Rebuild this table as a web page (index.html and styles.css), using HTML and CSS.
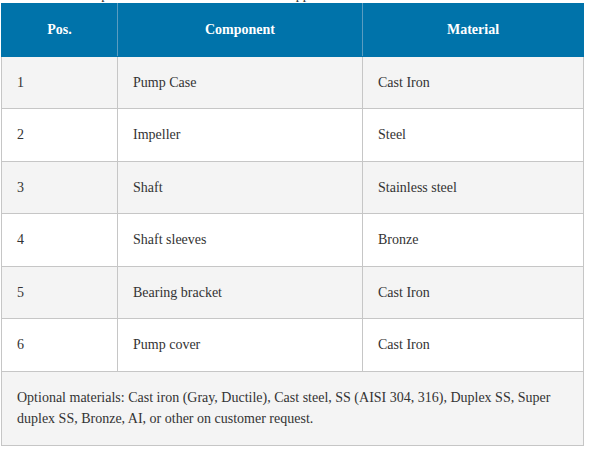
FILE: index.html
```html
<!DOCTYPE html>
<html>
<head>
<meta charset="utf-8">
<link rel="stylesheet" href="styles.css">
</head>
<body>
<p class="intro">The standard components and the materials of the supplied unit.</p>
<table class="spec">
  <colgroup>
    <col class="c1"><col class="c2"><col class="c3">
  </colgroup>
  <thead>
    <tr><th>Pos.</th><th>Component</th><th>Material</th></tr>
  </thead>
  <tbody>
    <tr><td>1</td><td>Pump Case</td><td>Cast Iron</td></tr>
    <tr><td>2</td><td>Impeller</td><td>Steel</td></tr>
    <tr><td>3</td><td>Shaft</td><td>Stainless steel</td></tr>
    <tr><td>4</td><td>Shaft sleeves</td><td>Bronze</td></tr>
    <tr><td>5</td><td>Bearing bracket</td><td>Cast Iron</td></tr>
    <tr><td>6</td><td>Pump cover</td><td>Cast Iron</td></tr>
    <tr class="note"><td colspan="3">Optional materials: Cast iron (Gray, Ductile), Cast steel, SS (AISI 304, 316), Duplex SS, Super duplex SS, Bronze, AI, or other on customer request.</td></tr>
  </tbody>
</table>
</body>
</html>
```
FILE: styles.css
```css
html, body {
  margin: 0;
  padding: 0;
  background: #fff;
}
body {
  font-family: "Liberation Serif", "Times New Roman", serif;
  font-size: 14px;
  color: #333;
}
.intro {
  margin: -16px 0 -3px 1px;
  line-height: 22px;
  white-space: nowrap;
}
.spec {
  position: relative;
  border-collapse: collapse;
  table-layout: fixed;
  width: 582px;
  margin-left: 1px;
}
.c1 { width: 116px; }
.c2 { width: 245px; }
.c3 { width: 221px; }
.spec th,
.spec td {
  border: 1px solid #c6c6c6;
  padding: 15px 15px;
  line-height: 21.5px;
  text-align: left;
  vertical-align: middle;
}
.spec th {
  background: #0073aa;
  color: #fff;
  font-weight: bold;
  text-align: center;
  border-color: #0073aa;
  border-left-color: #5a9cc0;
  border-right-color: #5a9cc0;
  border-bottom-color: #0073aa;
}
.spec th:first-child { border-left-color: #0073aa; }
.spec th:last-child { border-right-color: #0073aa; }
.spec tbody tr:nth-child(odd) td {
  background: #f4f4f4;
}
.spec tbody tr:nth-child(even) td {
  background: #fff;
}
.spec .note td {
  background: #f4f4f4;
}
```
